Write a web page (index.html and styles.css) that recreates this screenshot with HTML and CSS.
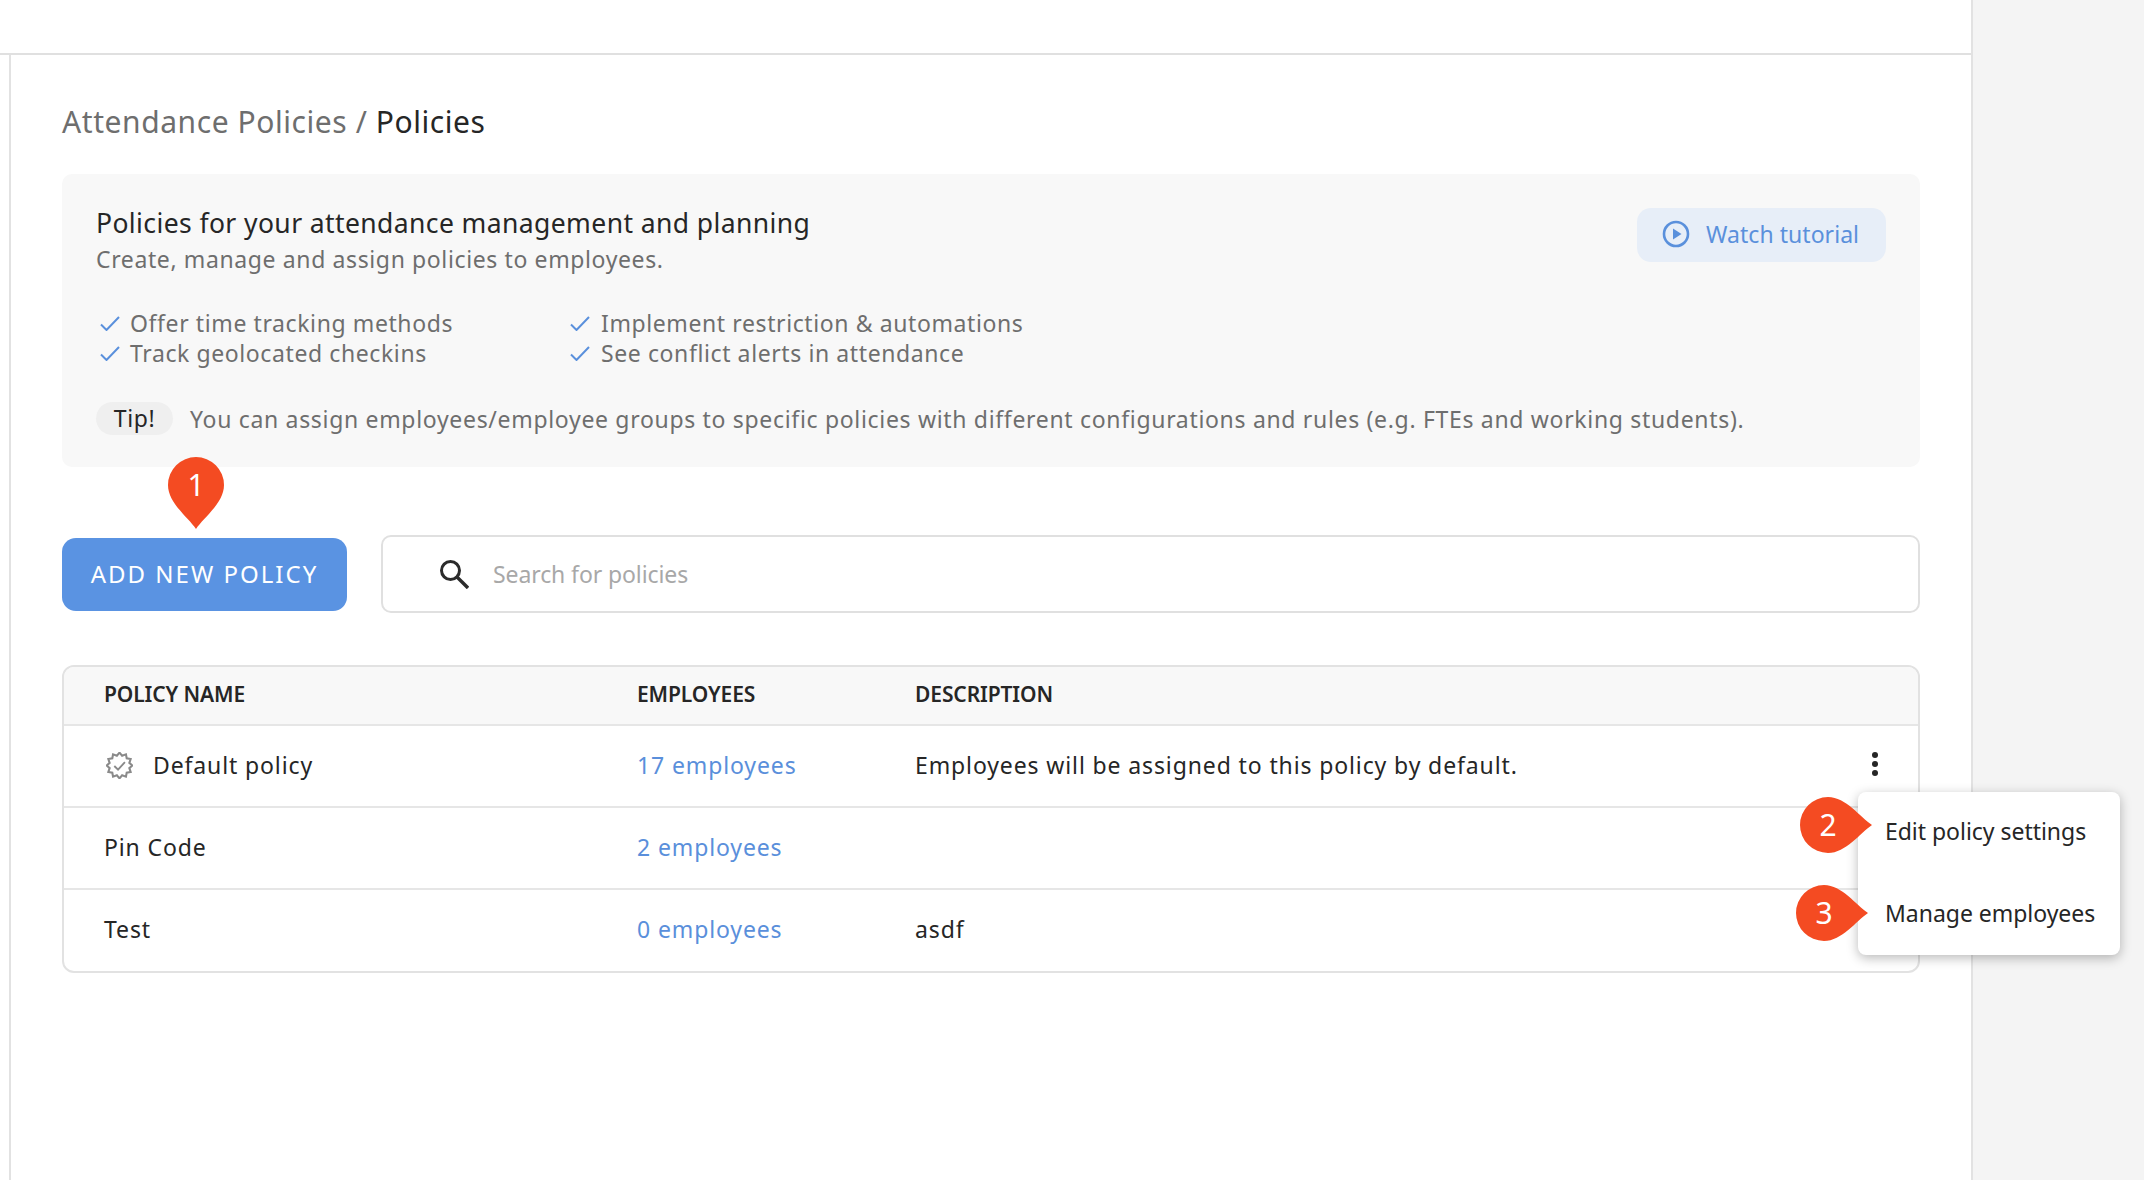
FILE: index.html
```html
<!DOCTYPE html>
<html lang="en">
<head>
<meta charset="utf-8">
<title>Policies</title>
<link rel="stylesheet" href="styles.css">
</head>
<body>
<div class="app">
  <div class="main">
    <header class="topbar"></header>
    <main class="content">
      <h1 class="crumbs"><span class="crumb-muted">Attendance Policies / </span>Policies</h1>
      <section class="banner">
        <div class="banner-head">
          <div>
            <h2 class="banner-title">Policies for your attendance management and planning</h2>
            <p class="banner-sub">Create, manage and assign policies to employees.</p>
          </div>
          <button class="tutorial">
            <svg class="play" viewBox="0 0 28 28"><circle cx="14" cy="14" r="12" fill="none" stroke="#5a90dc" stroke-width="2.6"/><path d="M11 8.5 19.5 14 11 19.5Z" fill="#5a90dc"/></svg>
            Watch tutorial
          </button>
        </div>
        <div class="features">
          <ul class="feature-col">
            <li><svg class="check" viewBox="0 0 20 15"><path d="M1 8.5 6.5 14 19 1" fill="none" stroke="#5a90dc" stroke-width="2"/></svg>Offer time tracking methods</li>
            <li><svg class="check" viewBox="0 0 20 15"><path d="M1 8.5 6.5 14 19 1" fill="none" stroke="#5a90dc" stroke-width="2"/></svg>Track geolocated checkins</li>
          </ul>
          <ul class="feature-col">
            <li><svg class="check" viewBox="0 0 20 15"><path d="M1 8.5 6.5 14 19 1" fill="none" stroke="#5a90dc" stroke-width="2"/></svg>Implement restriction &amp; automations</li>
            <li><svg class="check" viewBox="0 0 20 15"><path d="M1 8.5 6.5 14 19 1" fill="none" stroke="#5a90dc" stroke-width="2"/></svg>See conflict alerts in attendance</li>
          </ul>
        </div>
        <p class="tip"><span class="tip-pill">Tip!</span>You can assign employees/employee groups to specific policies with different configurations and rules (e.g. FTEs and working students).</p>
      </section>
      <div class="toolbar">
        <button class="add">ADD NEW POLICY</button>
        <div class="search">
          <svg class="search-icon" viewBox="0 0 30 30"><circle cx="11.5" cy="11.5" r="9" fill="none" stroke="#2b2b2b" stroke-width="3"/><path d="M18 18 29 29" stroke="#2b2b2b" stroke-width="3.4"/></svg>
          <span class="placeholder">Search for policies</span>
        </div>
      </div>
      <div class="table">
        <div class="row head"><span>POLICY NAME</span><span>EMPLOYEES</span><span>DESCRIPTION</span></div>
        <div class="row">
          <span class="name">
            <svg class="badge" viewBox="0 0 26 26"><path d="M13 .6 15.54 3.53 19.2 2.26 19.93 6.07 23.74 6.8 22.47 10.46 25.4 13 22.47 15.54 23.74 19.2 19.93 19.93 19.2 23.74 15.54 22.47 13 25.4 10.46 22.47 6.8 23.74 6.07 19.93 2.26 19.2 3.53 15.54 .6 13 3.53 10.46 2.26 6.8 6.07 6.07 6.8 2.26 10.46 3.53Z" fill="none" stroke="#8a8a8a" stroke-width="2"/><path d="M8 13.5 11.6 17 18.2 9.8" fill="none" stroke="#8a8a8a" stroke-width="1.8"/></svg>
            Default policy
          </span>
          <a class="link">17 employees</a>
          <span>Employees will be assigned to this policy by default.</span>
          <span class="dots"><i></i><i></i><i></i></span>
        </div>
        <div class="row"><span>Pin Code</span><a class="link">2 employees</a><span></span></div>
        <div class="row"><span>Test</span><a class="link">0 employees</a><span>asdf</span></div>
      </div>
    </main>
  </div>
  <aside class="side"></aside>
</div>

<div class="menu">
  <div class="menu-item">Edit policy settings</div>
  <div class="menu-item">Manage employees</div>
</div>

<div class="pin pin-1"><svg viewBox="0 0 56 72"><path d="M28 72C20 60 0 46 0 28A28 28 0 0 1 56 28C56 46 36 60 28 72Z" fill="#f44b22"/></svg><span class="pin-num">1</span></div>
<div class="pin pin-2"><svg viewBox="0 0 72 56"><path d="M72 28C60 20 46 0 28 0A28 28 0 0 0 28 56C46 56 60 36 72 28Z" fill="#f44b22"/></svg><span class="pin-num">2</span></div>
<div class="pin pin-3"><svg viewBox="0 0 72 56"><path d="M72 28C60 20 46 0 28 0A28 28 0 0 0 28 56C46 56 60 36 72 28Z" fill="#f44b22"/></svg><span class="pin-num">3</span></div>
</body>
</html>
```
FILE: styles.css
```css
* { box-sizing: border-box; }
html, body { margin: 0; height: 100%; }
body {
  position: relative;
  overflow: hidden;
  background: #fff;
  color: #262626;
  font-family: "Noto Sans", "Liberation Sans", sans-serif;
  font-size: 23px;
}
h1, h2, p, ul { margin: 0; padding: 0; list-style: none; font-weight: 400; }

.app { display: flex; height: 1180px; }
.main { width: 1973px; border-right: 2px solid #e2e2e2; display: flex; flex-direction: column; }
.side { flex: 1; background: #f4f4f4; }
.topbar { height: 55px; border-bottom: 2px solid #e0e0e0; flex: none; }
.content { flex: 1; margin-left: 9px; border-left: 2px solid #e2e2e2; padding: 46px 51px 0 51px; }

.crumbs { font-size: 30px; line-height: 42px; color: #262626; letter-spacing: .57px; }
.crumb-muted { color: #6e6e6e; }

.banner { margin-top: 31px; height: 293px; background: #f8f8f8; border-radius: 10px; padding: 34px 34px 0; }
.banner-head { display: flex; justify-content: space-between; align-items: flex-start; }
.banner-title { font-size: 26.5px; line-height: 30px; margin-top: 0; color: #262626; letter-spacing: .4px; }
.banner-sub { font-size: 23px; line-height: 30px; margin-top: 6px; color: #6e6e6e; letter-spacing: .62px; }
.tutorial {
  display: flex; align-items: center; gap: 16px;
  height: 54px; width: 249px; padding: 0 0 2px 25px;
  border: 0; border-radius: 14px;
  background: #e7eef8; color: #5a90dc;
  font: inherit; font-size: 23px; letter-spacing: .05px;
}
.play { width: 28px; height: 28px; flex: none; }

.features { display: flex; margin-top: 34px; color: #6e6e6e; font-size: 23px; line-height: 30px; letter-spacing: .6px; }
.feature-col { width: 470px; }
.feature-col li { display: flex; align-items: center; }
.check { width: 20px; height: 15px; margin: 0 11px 0 4px; flex: none; }
.feature-col:first-child .check { margin-right: 10px; }

.tip { display: flex; align-items: center; margin-top: 34px; color: #6e6e6e; font-size: 23px; letter-spacing: .68px; white-space: nowrap; }
.tip-pill { width: 77px; height: 33px; line-height: 33px; border-radius: 17px; background: #efefef; color: #262626; text-align: center; margin-right: 17px; flex: none; letter-spacing: .55px; }

.toolbar { display: flex; align-items: center; gap: 34px; margin-top: 68px; }
.add {
  width: 285px; height: 73px; padding: 0 0 2px; border: 0; border-radius: 14px;
  background: #5a93e2; color: #fff;
  font: inherit; font-size: 24px; letter-spacing: 2px;
}
.search {
  flex: 1; height: 78px; display: flex; align-items: center;
  border: 2px solid #e0e0e0; border-radius: 10px; padding-left: 56px;
}
.search-icon { width: 30px; height: 30px; flex: none; margin-right: 24px; }
.placeholder { color: #a8a8a8; font-size: 23px; letter-spacing: -.1px; }

.table { margin-top: 52px; border: 2px solid #e2e2e2; border-radius: 12px; height: 308px; overflow: hidden; }
.row {
  display: grid; grid-template-columns: 533px 278px 1fr 40px;
  align-items: center; height: 82px; padding: 0 0 2px 40px;
  border-top: 2px solid #e6e6e6; font-size: 23px; letter-spacing: .88px; position: relative;
}
.row.head {
  grid-template-columns: 533px 278px 1fr;
  height: 59px; padding-bottom: 3px; border-top: 0; border-bottom: 2px solid #e2e2e2; margin-bottom: -2px;
  background: #f8f8f8; font-size: 21px; font-weight: 600; letter-spacing: -.1px;
}
.name { display: flex; align-items: center; gap: 20px; }
.badge { width: 27px; height: 27px; margin-left: 2px; flex: none; }
.link { color: #5a8fdb; }
.dots { display: flex; flex-direction: column; gap: 3px; position: absolute; left: 1808px; top: 26px; }
.dots i { display: block; width: 6px; height: 6px; border-radius: 50%; background: #262626; }

.menu {
  position: absolute; left: 1858px; top: 792px; width: 262px; height: 163px;
  background: #fff; border-radius: 8px; box-shadow: 0 3px 12px rgba(0,0,0,.28);
  letter-spacing: -.03px; font-size: 23px; color: #262626;
}
.menu-item { height: 82px; line-height: 78px; padding-left: 27px; white-space: nowrap; }

.pin { position: absolute; }
.pin svg { display: block; width: 100%; height: 100%; }
.pin-1 { left: 168px; top: 457px; width: 56px; height: 72px; }
.pin-2 { left: 1800px; top: 797px; width: 72px; height: 56px; }
.pin-3 { left: 1796px; top: 885px; width: 72px; height: 56px; }
.pin-num { position: absolute; top: 0; left: 0; width: 56px; color: #fff; text-align: center; font-size: 30px; line-height: 56px; }
```
